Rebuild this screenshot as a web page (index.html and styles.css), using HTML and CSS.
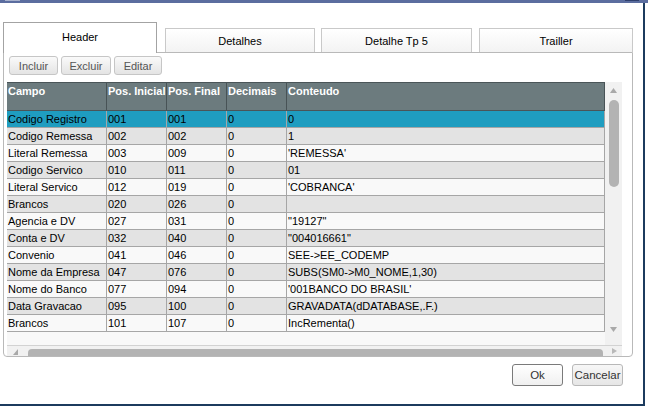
FILE: index.html
```html
<!DOCTYPE html>
<html>
<head>
<meta charset="utf-8">
<link rel="stylesheet" href="styles.css">
</head>
<body>
<div class="titlebar"><span class="tb-icon"></span><span class="tb-fill"></span><span class="tb-close"></span></div>
<div class="window">
  <div class="tabs">
    <div class="tab active">Header</div>
    <div class="tab t2">Detalhes</div>
    <div class="tab t3">Detalhe Tp 5</div>
    <div class="tab t4">Trailler</div>
  </div>
  <div class="panel">
    <div class="toolbar">
      <button class="tbtn w49">Incluir</button>
      <button class="tbtn w50">Excluir</button>
      <button class="tbtn w48">Editar</button>
    </div>
    <div class="grid">
      <div class="grid-main">
        <div class="data">
          <div class="row head"><div class="c c1">Campo</div><div class="c c2">Pos. Inicial</div><div class="c c3">Pos. Final</div><div class="c c4">Decimais</div><div class="c c5">Conteudo</div></div>
          <div class="row sel"><div class="c c1">Codigo Registro</div><div class="c c2">001</div><div class="c c3">001</div><div class="c c4">0</div><div class="c c5">0</div></div>
          <div class="row alt"><div class="c c1">Codigo Remessa</div><div class="c c2">002</div><div class="c c3">002</div><div class="c c4">0</div><div class="c c5">1</div></div>
          <div class="row"><div class="c c1">Literal Remessa</div><div class="c c2">003</div><div class="c c3">009</div><div class="c c4">0</div><div class="c c5">'REMESSA'</div></div>
          <div class="row alt"><div class="c c1">Codigo Servico</div><div class="c c2">010</div><div class="c c3">011</div><div class="c c4">0</div><div class="c c5">01</div></div>
          <div class="row"><div class="c c1">Literal Servico</div><div class="c c2">012</div><div class="c c3">019</div><div class="c c4">0</div><div class="c c5">'COBRANCA'</div></div>
          <div class="row alt"><div class="c c1">Brancos</div><div class="c c2">020</div><div class="c c3">026</div><div class="c c4">0</div><div class="c c5"></div></div>
          <div class="row"><div class="c c1">Agencia e DV</div><div class="c c2">027</div><div class="c c3">031</div><div class="c c4">0</div><div class="c c5">"19127"</div></div>
          <div class="row alt"><div class="c c1">Conta e DV</div><div class="c c2">032</div><div class="c c3">040</div><div class="c c4">0</div><div class="c c5">"004016661"</div></div>
          <div class="row"><div class="c c1">Convenio</div><div class="c c2">041</div><div class="c c3">046</div><div class="c c4">0</div><div class="c c5">SEE-&gt;EE_CODEMP</div></div>
          <div class="row alt"><div class="c c1">Nome da Empresa</div><div class="c c2">047</div><div class="c c3">076</div><div class="c c4">0</div><div class="c c5">SUBS(SM0-&gt;M0_NOME,1,30)</div></div>
          <div class="row"><div class="c c1">Nome do Banco</div><div class="c c2">077</div><div class="c c3">094</div><div class="c c4">0</div><div class="c c5">'001BANCO DO BRASIL'</div></div>
          <div class="row alt"><div class="c c1">Data Gravacao</div><div class="c c2">095</div><div class="c c3">100</div><div class="c c4">0</div><div class="c c5">GRAVADATA(dDATABASE,.F.)</div></div>
          <div class="row"><div class="c c1">Brancos</div><div class="c c2">101</div><div class="c c3">107</div><div class="c c4">0</div><div class="c c5">IncRementa()</div></div>
          <div class="filler"></div>
        </div>
        <div class="vscroll">
          <svg class="arr-up" width="7" height="5" viewBox="0 0 7 5"><path d="M3.5 0 L7 5 L0 5 Z" fill="#a9a9a9"/></svg>
          <div class="vthumb"></div>
          <div class="vspace"></div>
          <svg class="arr-down" width="7" height="5" viewBox="0 0 7 5"><path d="M0 0 L7 0 L3.5 5 Z" fill="#a9a9a9"/></svg>
        </div>
      </div>
      <div class="hscroll">
        <div class="hbar">
          <svg class="arr-left" width="5" height="6" viewBox="0 0 5 6"><path d="M5 0 L5 6 L0 6 Z" fill="#a9a9a9"/></svg>
          <div class="hthumb"></div>
        </div>
        <div class="corner">
          <svg class="arr-right" width="5" height="6" viewBox="0 0 5 6"><path d="M0 0 L5 3 L0 6 Z" fill="#b9b9b9"/></svg>
        </div>
      </div>
    </div>
  </div>
  <div class="actions">
    <button class="abtn ok">Ok</button>
    <button class="abtn cancel">Cancelar</button>
  </div>
</div>
</body>
</html>
```
FILE: styles.css
```css
* { box-sizing: border-box; }
html, body { margin: 0; padding: 0; }
body {
  width: 648px;
  height: 408px;
  overflow: hidden;
  background: #ffffff;
  font-family: "Liberation Sans", Arial, sans-serif;
  font-size: 11px;
  color: #000;
}
.titlebar {
  height: 3px;
  background: #5b6d9f;
  display: flex;
  align-items: flex-start;
}
.tb-icon { width: 15px; height: 1px; margin-left: 5px; background: #a7b1cc; }
.tb-fill { flex: 1; }
.tb-close { width: 14px; height: 1px; margin-right: 9px; background: #2e3f6d; }

.window {
  width: 645px;
  height: 403px;
  border-right: 2px solid #1c3b5e;
  border-bottom: 2px solid #1c3b5e;
}
.tabs {
  display: flex;
  align-items: flex-end;
  padding-top: 19px;
  padding-left: 3px;
}
.tab {
  display: flex;
  align-items: center;
  justify-content: center;
  border: 1px solid #c9c9c9;
  border-bottom: none;
  background: linear-gradient(#ffffff, #f3f3f3);
  height: 24px;
  padding-top: 1px;
}
.tab.active {
  position: relative;
  z-index: 1;
  width: 154px;
  height: 31px;
  margin-bottom: -1px;
  border-color: #a3a3a3;
  background: #ffffff;
  padding-top: 0;
  padding-bottom: 2px;
}
.tab.t2 { width: 150px; margin-left: 8px; }
.tab.t3 { width: 151px; margin-left: 6px; }
.tab.t4 { width: 154px; margin-left: 7px; }

.panel {
  margin-left: 3px;
  width: 630px;
  height: 305px;
  border: 1px solid #b9b9b9;
  border-radius: 0 0 4px 4px;
  background: #ffffff;
}
.toolbar {
  display: flex;
  padding: 3px 0 0 5px;
  gap: 3px;
}
.tbtn {
  height: 19px;
  padding: 0;
  font-family: inherit;
  font-size: 11px;
  color: #555;
  border: 1px solid #c6c6c6;
  border-radius: 3px;
  background: linear-gradient(#fafafa, #e4e4e4);
}
.w49 { width: 49px; }
.w50 { width: 50px; }
.w48 { width: 48px; }

.grid {
  margin: 7px 0 0 3px;
  width: 615px;
}
.grid-main { display: flex; }
.data { width: 598px; }
.row {
  display: flex;
  height: 17px;
  border-bottom: 1px solid #a6a6a6;
}
.row .c {
  border-right: 1px solid #a6a6a6;
  padding-left: 1px;
  line-height: 16px;
  white-space: nowrap;
  overflow: hidden;
}
.c1 { width: 100px; }
.c2, .c3, .c4 { width: 60px; }
.c5 { width: 318px; }
.row.head {
  height: 29px;
  background: #6c7b7e;
  border-top: 1px solid #4a5558;
  border-bottom: 1px solid #4a5558;
}
.row.head .c {
  border-right: 1px solid #485356;
  color: #ffffff;
  font-weight: bold;
  line-height: 13px;
  padding-top: 2px;
}
.row.sel { background: #1f9dc0; }
.row.alt { background: #e3e3e3; }
.row { background: #f9f9f9; }
.filler { height: 13px; background: #f8f8f8; }

.vscroll {
  width: 17px;
  height: 263px;
  background: #f1f1f1;
  display: flex;
  flex-direction: column;
  align-items: center;
  padding-top: 6px;
  padding-bottom: 13px;
}
.vthumb {
  width: 10px;
  height: 87px;
  margin-top: 7px;
  border-radius: 5px;
  background: #b3b3b3;
}
.vspace { flex: 1; }

.hscroll {
  display: flex;
  height: 11px;
  border-top: 1px solid #d2d2d2;
  background: #f1f1f1;
}
.hbar {
  width: 598px;
  display: flex;
  align-items: flex-end;
  padding-left: 6px;
}
.arr-left { margin-bottom: 1px; }
.hthumb {
  width: 575px;
  height: 7px;
  margin-left: 10px;
  border-radius: 4px 4px 0 0;
  background: #b3b3b3;
}
.corner {
  width: 17px;
  display: flex;
  align-items: center;
  justify-content: center;
  padding-left: 2px;
}

.actions {
  display: flex;
  justify-content: flex-end;
  gap: 9px;
  margin-top: 7px;
  padding-right: 20px;
}
.abtn {
  width: 51px;
  height: 22px;
  padding: 0;
  font-family: inherit;
  font-size: 11.5px;
  color: #333;
  border-radius: 3px;
}
.abtn.ok {
  border: 1px solid #7a7a7a;
  background: linear-gradient(#ffffff, #f0f0f0);
}
.abtn.cancel {
  border: 1px solid #b8b8b8;
  background: linear-gradient(#f7f7f7, #e6e6e6);
}
```
